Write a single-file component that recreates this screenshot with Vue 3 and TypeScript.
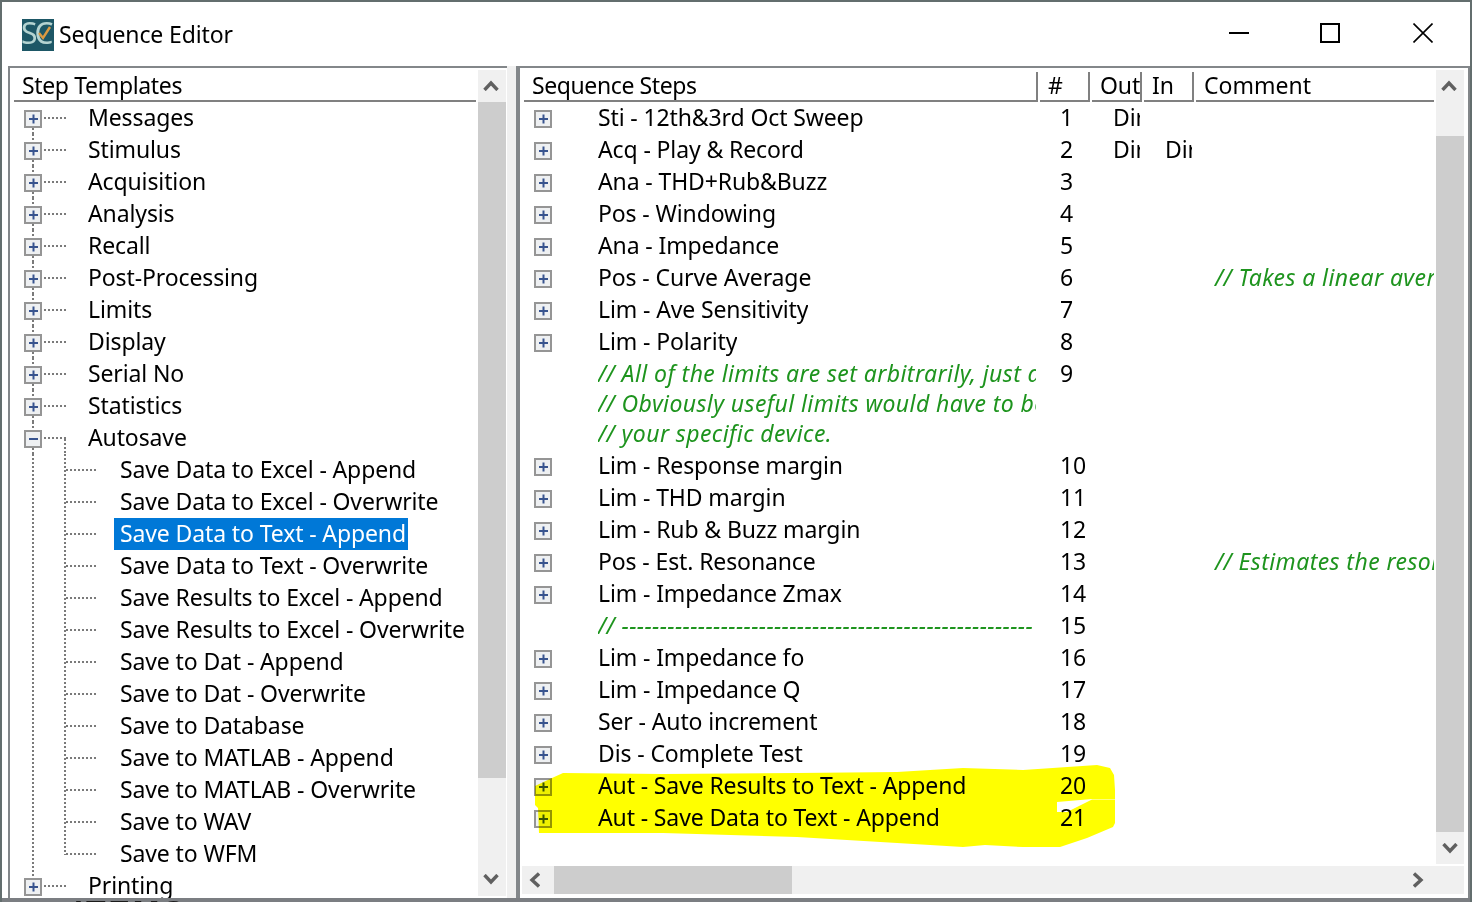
<script setup lang="ts">
type TreeKind = 'first' | 'parent' | 'open' | 'child' | 'last' | 'end'
interface TreeRow { label: string; kind: TreeKind; selected?: boolean }
interface StepRow { n: number; lines: string[]; note?: boolean; out?: string; input?: string; comment?: string }

const tree: TreeRow[] = [
  { label: 'Messages', kind: 'first' },
  { label: 'Stimulus', kind: 'parent' },
  { label: 'Acquisition', kind: 'parent' },
  { label: 'Analysis', kind: 'parent' },
  { label: 'Recall', kind: 'parent' },
  { label: 'Post-Processing', kind: 'parent' },
  { label: 'Limits', kind: 'parent' },
  { label: 'Display', kind: 'parent' },
  { label: 'Serial No', kind: 'parent' },
  { label: 'Statistics', kind: 'parent' },
  { label: 'Autosave', kind: 'open' },
  { label: 'Save Data to Excel - Append', kind: 'child' },
  { label: 'Save Data to Excel - Overwrite', kind: 'child' },
  { label: 'Save Data to Text - Append', kind: 'child', selected: true },
  { label: 'Save Data to Text - Overwrite', kind: 'child' },
  { label: 'Save Results to Excel - Append', kind: 'child' },
  { label: 'Save Results to Excel - Overwrite', kind: 'child' },
  { label: 'Save to Dat - Append', kind: 'child' },
  { label: 'Save to Dat - Overwrite', kind: 'child' },
  { label: 'Save to Database', kind: 'child' },
  { label: 'Save to MATLAB - Append', kind: 'child' },
  { label: 'Save to MATLAB - Overwrite', kind: 'child' },
  { label: 'Save to WAV', kind: 'child' },
  { label: 'Save to WFM', kind: 'last' },
  { label: 'Printing', kind: 'end' },
]

const steps: StepRow[] = [
  { n: 1, lines: ['Sti - 12th&3rd Oct Sweep'], out: 'Dir' },
  { n: 2, lines: ['Acq - Play & Record'], out: 'Dir', input: 'Dir' },
  { n: 3, lines: ['Ana - THD+Rub&Buzz'] },
  { n: 4, lines: ['Pos - Windowing'] },
  { n: 5, lines: ['Ana - Impedance'] },
  { n: 6, lines: ['Pos - Curve Average'], comment: '// Takes a linear average of the curves' },
  { n: 7, lines: ['Lim - Ave Sensitivity'] },
  { n: 8, lines: ['Lim - Polarity'] },
  { n: 9, note: true, lines: ['// All of the limits are set arbitrarily, just as an example.', '// Obviously useful limits would have to be set for', '// your specific device.'] },
  { n: 10, lines: ['Lim - Response margin'] },
  { n: 11, lines: ['Lim - THD margin'] },
  { n: 12, lines: ['Lim - Rub & Buzz margin'] },
  { n: 13, lines: ['Pos - Est. Resonance'], comment: '// Estimates the resonance of the device' },
  { n: 14, lines: ['Lim - Impedance Zmax'] },
  { n: 15, note: true, lines: ['// ------------------------------------------------------'] },
  { n: 16, lines: ['Lim - Impedance fo'] },
  { n: 17, lines: ['Lim - Impedance Q'] },
  { n: 18, lines: ['Ser - Auto increment'] },
  { n: 19, lines: ['Dis - Complete Test'] },
  { n: 20, lines: ['Aut - Save Results to Text - Append'] },
  { n: 21, lines: ['Aut - Save Data to Text - Append'] },
]

const isTop = (k: TreeKind): boolean => k === 'first' || k === 'parent' || k === 'open' || k === 'end'
const isSub = (k: TreeKind): boolean => k === 'child' || k === 'last'
</script>

<template>
  <div class="window">
    <header class="titlebar">
      <svg class="logo" width="32" height="32" viewBox="0 0 32 32">
        <rect width="32" height="32" fill="#1d5766" />
        <text x="-1" y="25" class="logo-text">SC</text>
        <polyline points="17,14 21,19 28,8" fill="none" stroke="#dc9a42" stroke-width="2.4" />
      </svg>
      <span class="title">Sequence Editor</span>
      <div class="controls">
        <svg width="20" height="20" viewBox="0 0 20 20"><rect x="0" y="9" width="20" height="2" fill="#000" /></svg>
        <svg width="20" height="20" viewBox="0 0 20 20"><rect x="1" y="1" width="18" height="18" fill="none" stroke="#000" stroke-width="2" /></svg>
        <svg width="20" height="20" viewBox="0 0 20 20"><path d="M0.5 0.5L19.5 19.5M19.5 0.5L0.5 19.5" stroke="#000" stroke-width="1.6" /></svg>
      </div>
    </header>

    <main class="panes">
      <section class="pane pane-left">
        <div class="tree-col">
          <div class="head head-left"><span>Step Templates</span></div>
          <div v-for="r in tree" :key="r.label" class="tree-row">
            <svg class="guide" :width="isTop(r.kind) ? 68 : 100" height="32">
              <g fill="none" stroke="#7a7a7a" stroke-width="2" stroke-dasharray="2 2">
                <template v-if="isTop(r.kind)">
                  <path v-if="r.kind !== 'first'" d="M19 0V8" />
                  <path v-if="r.kind !== 'end'" d="M19 26V32" />
                  <path d="M30 16H52" />
                  <path v-if="r.kind === 'open'" d="M51 17V32" />
                </template>
                <template v-if="isSub(r.kind)">
                  <path d="M19 0V32" />
                  <path :d="r.kind === 'last' ? 'M51 0V17' : 'M51 0V32'" />
                  <path d="M52 16H84" />
                </template>
              </g>
              <g v-if="isTop(r.kind)">
                <rect x="11" y="9" width="16" height="16" fill="#eef0f2" stroke="#959595" stroke-width="2" />
                <rect x="15" y="16" width="9" height="2" fill="#38548f" />
                <rect v-if="r.kind !== 'open'" x="18.5" y="12.5" width="2" height="9" fill="#38548f" />
              </g>
            </svg>
            <span class="tree-label" :class="{ selected: r.selected }">{{ r.label }}</span>
          </div>
        </div>
        <div class="vbar vbar-left">
          <div class="btn btn-up">
            <svg width="16" height="11" viewBox="0 0 16 11"><polyline points="1.5,10 8,3 14.5,10" fill="none" stroke="#606060" stroke-width="3.4" /></svg>
          </div>
          <div class="thumb thumb-left"></div>
          <div class="fill"></div>
          <div class="btn btn-down">
            <svg width="16" height="11" viewBox="0 0 16 11"><polyline points="1.5,1 8,8 14.5,1" fill="none" stroke="#606060" stroke-width="3.4" /></svg>
          </div>
        </div>
      </section>

      <div class="splitter"></div>

      <section class="pane pane-right">
        <div class="list">
          <div class="grid head-row">
            <div class="hcell hcell-name">Sequence Steps</div>
            <div class="hcell hcell-num">#</div>
            <div class="hcell">Out</div>
            <div class="hcell">In</div>
            <div class="hcell hcell-last">Comment</div>
          </div>
          <div v-for="s in steps" :key="s.n" class="grid step" :class="{ multi: s.lines.length > 1 }">
            <div class="name" :class="{ note: s.note }">
              <svg v-if="!s.note" class="box" width="18" height="18" viewBox="0 0 18 18">
                <rect x="1" y="1" width="16" height="16" fill="#eef0f2" stroke="#959595" stroke-width="2" />
                <rect x="5" y="8" width="9" height="2" fill="#38548f" />
                <rect x="8.5" y="4.5" width="2" height="9" fill="#38548f" />
              </svg>
              <div class="name-lines">
                <div v-for="l in s.lines" :key="l" class="name-line">{{ l }}</div>
              </div>
            </div>
            <div class="num">{{ s.n }}</div>
            <div class="io"><span class="io-clip">{{ s.out }}</span></div>
            <div class="io"><span class="io-clip">{{ s.input }}</span></div>
            <div class="comment">{{ s.comment }}</div>
          </div>
        </div>
        <div class="vbar vbar-right">
          <div class="btn btn-up">
            <svg width="16" height="11" viewBox="0 0 16 11"><polyline points="1.5,10 8,3 14.5,10" fill="none" stroke="#606060" stroke-width="3.4" /></svg>
          </div>
          <div class="gap-top"></div>
          <div class="thumb thumb-right"></div>
          <div class="btn">
            <svg width="16" height="11" viewBox="0 0 16 11"><polyline points="1.5,1 8,8 14.5,1" fill="none" stroke="#606060" stroke-width="3.4" /></svg>
          </div>
        </div>
        <div class="hbar">
          <div class="btn btn-h btn-left">
            <svg width="11" height="16" viewBox="0 0 11 16"><polyline points="10,1.5 3,8 10,14.5" fill="none" stroke="#606060" stroke-width="3.4" /></svg>
          </div>
          <div class="thumb thumb-h"></div>
          <div class="fill"></div>
          <div class="btn btn-h">
            <svg width="11" height="16" viewBox="0 0 11 16"><polyline points="1,1.5 8,8 1,14.5" fill="none" stroke="#606060" stroke-width="3.4" /></svg>
          </div>
          <div class="corner"></div>
        </div>
      </section>
    </main>

    <footer class="strip"><span>ITEMS</span></footer>

    <svg class="marker" width="1472" height="902" viewBox="0 0 1472 902">
      <path fill="#ffff00"
        d="M535 786 L552 778 L563 773 L663 774 L797 773 L897 772 L963 768 L1023 770 L1097 765 L1110 768 L1114 775 L1115 790 L1115 799 L1092 799 L1057 802 L1057 812 L1067 812 L1077 807 L1092 799.6 L1115 799.6 L1115 823 L1113 827 L1087 838 L1060 847 L1023 847 L985 845 L963 847 L897 843 L797 837 L663 833 L539 833 L538 808 L535 805 Z" />
    </svg>
  </div>
</template>

<style>
html, body { margin: 0; padding: 0; background: #fff; }
</style>

<style scoped>
.window {
  position: relative;
  width: 1472px;
  height: 902px;
  box-sizing: border-box;
  display: flex;
  flex-direction: column;
  background: #fff;
  border-top: 2px solid #636e6e;
  border-left: 2px solid #636e6e;
  border-right: 2px solid #636e6e;
  font-family: "Noto Sans", "Open Sans", sans-serif;
  font-size: 23px;
  letter-spacing: -0.12px;
  color: #000;
  overflow: hidden;
}
.titlebar {
  height: 64px;
  flex: none;
  display: flex;
  align-items: center;
  padding-left: 20px;
}
.logo { flex: none; margin-top: 1px; }
.logo-text { font-family: "Noto Sans", sans-serif; font-size: 30px; fill: #b4d3d1; letter-spacing: -3px; }
.title { margin-left: 5px; line-height: 30px; margin-bottom: 1px; }
.controls {
  margin-left: auto;
  margin-right: 37px;
  display: flex;
  margin-bottom: 2px;
}
.controls svg:nth-child(2) { margin-left: 71px; }
.controls svg:nth-child(3) { margin-left: 73px; }
.panes {
  flex: 1;
  min-height: 0;
  display: flex;
  padding-left: 6px;
}
.pane {
  border-top: 2px solid #83878a;
  padding-top: 2px;
  box-sizing: border-box;
  display: flex;
  background: #fff;
}
.pane-left {
  width: 499px;
  flex: none;
  border-left: 2px solid #83878a;
  padding-left: 4px;
  padding-right: 1px;
  gap: 2px;
}
.tree-col {
  width: 462px;
  flex: none;
  overflow: hidden;
}
.head-left {
  height: 32px;
  box-sizing: border-box;
  border-bottom: 2px solid #808080;
  padding-left: 8px;
  line-height: 30px;
  letter-spacing: -0.35px;
}
.tree-row {
  height: 32px;
  display: flex;
  white-space: nowrap;
}
.guide { flex: none; display: block; }
.tree-label {
  padding: 0 6px;
  line-height: 30px;
  height: 32px;
}
.tree-label.selected { background: #0078d7; color: #fff; padding-right: 2px; }
.vbar {
  width: 28px;
  flex: none;
  display: flex;
  flex-direction: column;
  background: #f0f0f0;
}
.vbar-left { margin-bottom: 2px; }
.btn {
  height: 32px;
  flex: none;
  display: flex;
  align-items: center;
  justify-content: center;
  box-sizing: border-box;
}
.btn-up { padding: 0 2px 2px 0; }
.btn-down { padding: 0 2px 2px 0; }
.vbar-left .btn { padding-right: 2px; }
.btn-h { width: 32px; height: 28px; }
.btn-left { padding-right: 8px; }
.thumb { background: #cdcdcd; flex: none; }
.thumb-left { height: 676px; }
.thumb-right { height: 696px; }
.thumb-h { width: 238px; height: 28px; }
.gap-top { height: 34px; flex: none; }
.fill { flex: 1; }
.splitter { width: 9px; flex: none; background: #f0f0f0; }
.pane-right {
  flex: 1;
  min-width: 0;
  border-left: 4px solid #83878a;
  border-right: 2px solid #83878a;
  padding-left: 2px;
  padding-right: 4px;
  display: grid;
  grid-template-columns: 912px 28px;
  grid-template-rows: 794px 28px;
  column-gap: 2px;
  row-gap: 2px;
  align-content: start;
}
.list { overflow: hidden; padding-left: 2px; }
.grid {
  display: grid;
  grid-template-columns: 514px 50px 50px 50px 238px;
  column-gap: 2px;
}
.head-row { height: 32px; }
.hcell {
  margin-top: 2px;
  height: 30px;
  box-sizing: border-box;
  border-right: 2px solid #808080;
  border-bottom: 2px solid #808080;
  padding-left: 8px;
  line-height: 26px;
  overflow: hidden;
  white-space: nowrap;
}
.hcell-name { letter-spacing: -0.4px; }
.hcell-last { border-right: 0; letter-spacing: 0; }
.step { min-height: 32px; line-height: 30px; }
.name {
  display: flex;
  overflow: hidden;
  white-space: nowrap;
  margin-right: 2px;
}
.name-lines { overflow: hidden; }
.name.note {
  padding-left: 74px;
  color: #1e941e;
  font-style: italic;
  letter-spacing: 0.42px;
}
.box { flex: none; margin: 8px 46px 0 10px; }
.multi .name-lines { padding: 0 0 2px; }
.multi .name-line { line-height: 30px; }
.num { padding-left: 20px; }
.io { padding-left: 21px; }
.io-clip { display: block; overflow: hidden; white-space: nowrap; width: 27px; }
.comment {
  padding-left: 19px;
  color: #1e941e;
  font-style: italic;
  letter-spacing: 0.42px;
  overflow: hidden;
  white-space: nowrap;
}
.hbar {
  grid-column: 1 / -1;
  display: flex;
  background: #f0f0f0;
  height: 28px;
}
.corner { width: 30px; flex: none; }
.strip {
  height: 4px;
  flex: none;
  margin: 0 -2px;
  background: #7b7e82;
  overflow: hidden;
  color: #1a1a1a;
  font-family: "Liberation Sans", sans-serif;
  font-weight: 700;
  font-size: 32px;
  line-height: 28px;
  padding-left: 74px;
  letter-spacing: 3px;
}
.marker {
  position: absolute;
  left: -2px;
  top: -2px;
  mix-blend-mode: multiply;
  pointer-events: none;
}
</style>
